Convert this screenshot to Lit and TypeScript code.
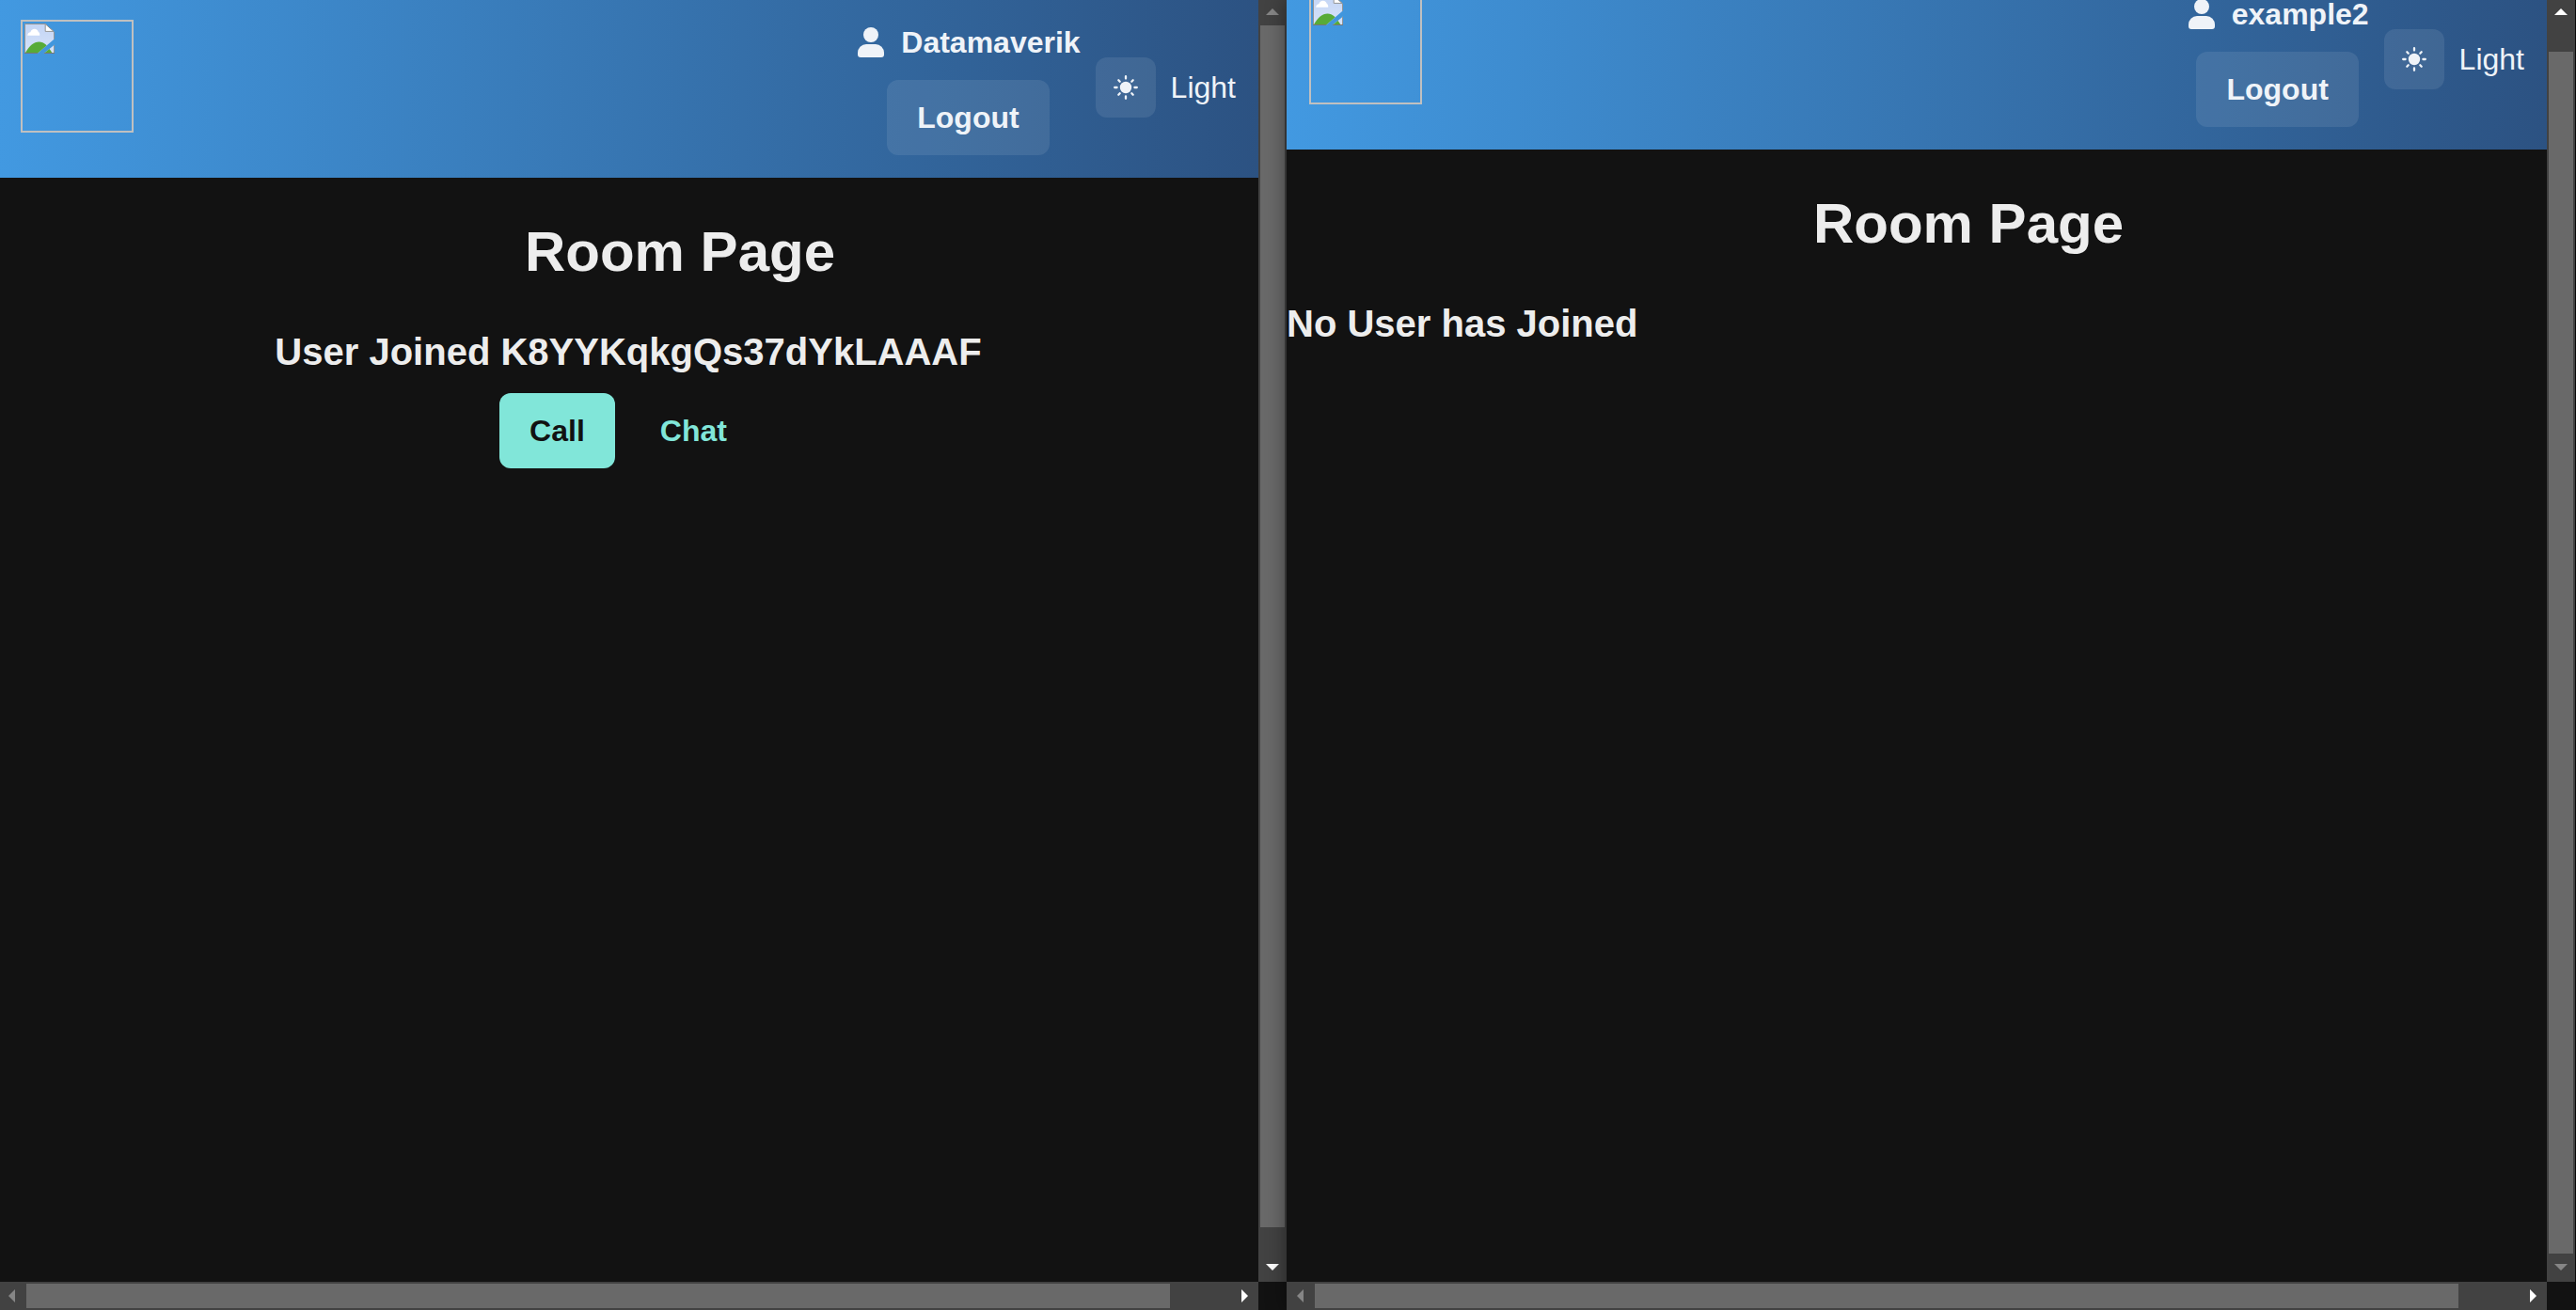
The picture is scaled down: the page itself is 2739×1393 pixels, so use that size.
import { LitElement, html, css, svg } from "lit";
import { customElement, property } from "lit/decorators.js";
import { classMap } from "lit/directives/class-map.js";

const userIcon = svg`
  <circle cx="16" cy="8" r="8"></circle>
  <path d="M11 18h10a9 9 0 0 1 9 9v2a3 3 0 0 1-3 3H5a3 3 0 0 1-3-3v-2a9 9 0 0 1 9-9z"></path>`;

const sunIcon = svg`
  <circle cx="13" cy="13" r="6.2"></circle>
  <path fill="none" stroke="currentColor" stroke-width="2.3" stroke-linecap="round"
    d="M13 1.2v2.4M13 22.4v2.4M1.2 13h2.4M22.4 13h2.4M5.3 5.3l1.4 1.4M19.3 19.3l1.4 1.4M5.3 20.7l1.4-1.4M19.3 6.7l1.4-1.4"></path>`;

const missingImageIcon = svg`
  <defs>
    <linearGradient id="sky" x1="0" y1="0" x2="0" y2="1">
      <stop offset="0" stop-color="#c3d5f5"></stop>
      <stop offset="1" stop-color="#d6e2f9"></stop>
    </linearGradient>
    <clipPath id="torn"><path d="M0 0H32V16.3L13.5 32H0zM20.5 32L32 22.6V32z"></path></clipPath>
  </defs>
  <g clip-path="url(#torn)">
    <path d="M.5.5H22L31.5 9V31.5H.5z" fill="url(#sky)" stroke="#949494"></path>
    <path d="M1 31C5 24 10 19.6 15.5 19.6S25 24 29.3 31z" fill="#58ab37"></path>
    <path d="M0 31.5H32" stroke="#777" stroke-width="1.2"></path>
    <path d="M3.2 12.8C3.2 10.6 4.6 9.4 6.4 9.2 7 7 8.6 5.8 10.7 5.8S14.4 7.1 14.8 9C16 9.6 16.4 11 16.2 12.8z" fill="#fff"></path>
    <path d="M22.2.6V8.4H31z" fill="#fff" stroke="#949494"></path>
  </g>`;

@customElement("scroll-bar")
class ScrollBar extends LitElement {
  @property({ type: Boolean, reflect: true }) vertical = false;
  @property({ type: Boolean }) atEnd = false;
  @property({ type: Number }) size = 95;

  static styles = css`
    :host {
      display: grid;
      grid-template: 30px / 30px 1fr 30px;
      background: #424242;
    }
    :host([vertical]) {
      grid-template: 30px 1fr 30px / 30px;
    }
    .arrow {
      width: 30px;
      height: 30px;
      display: block;
      fill: #868686;
    }
    .active {
      fill: #fff;
    }
    .track {
      display: flex;
      padding: 2px 0;
    }
    :host([vertical]) .track {
      flex-direction: column;
      padding: 0 2px;
    }
    .end {
      justify-content: flex-end;
    }
    .thumb {
      background: #696969;
    }
  `;

  render() {
    const back = this.vertical ? "M8 19L15 12L22 19z" : "M18 8L11 15L18 22z";
    const forward = this.vertical ? "M8 11L15 18L22 11z" : "M12 8L19 15L12 22z";
    return html`
      <svg class=${classMap({ arrow: true, active: this.atEnd })} viewBox="0 0 30 30"><path d=${back}></path></svg>
      <div class=${classMap({ track: true, end: this.atEnd })}>
        <div class="thumb" style="flex-basis: ${this.size}%"></div>
      </div>
      <svg class=${classMap({ arrow: true, active: !this.atEnd })} viewBox="0 0 30 30"><path d=${forward}></path></svg>
    `;
  }
}

@customElement("room-pane")
class RoomPane extends LitElement {
  @property() user = "";
  @property() peer = "";
  @property({ type: Boolean, reflect: true }) scrolled = false;

  static styles = css`
    :host {
      display: grid;
      grid-template: minmax(0, 1fr) 30px / minmax(0, 1fr) 30px;
      background: #121212;
      color: #ededed;
    }
    .viewport {
      overflow: hidden;
    }
    :host([scrolled]) .page {
      margin-top: -30px;
    }
    header {
      display: flex;
      align-items: center;
      justify-content: space-between;
      padding: 24px;
      background: linear-gradient(to right, #4299e1, #2c5282);
      color: #eff3f8;
      font-size: 32px;
      line-height: 48px;
    }
    .logo {
      align-self: flex-start;
      box-sizing: border-box;
      width: 120px;
      height: 120px;
      padding: 2px;
      border: 2px solid #c0c0c0;
    }
    .logo svg {
      display: block;
    }
    .actions,
    .theme,
    .name {
      display: flex;
      align-items: center;
      gap: 16px;
    }
    .account {
      display: flex;
      flex-direction: column;
      align-items: center;
      gap: 16px;
    }
    .name {
      font-weight: 700;
    }
    svg {
      fill: currentColor;
    }
    button {
      box-sizing: border-box;
      height: 80px;
      padding: 0 32px;
      border: 0;
      border-radius: 12px;
      background: none;
      color: inherit;
      font: inherit;
      font-size: 32px;
      font-weight: 700;
      cursor: pointer;
    }
    .soft {
      background: rgba(255, 255, 255, 0.09);
    }
    .toggle {
      display: flex;
      align-items: center;
      justify-content: center;
      width: 64px;
      height: 64px;
      padding: 0;
    }
    h1 {
      margin: 43px 0 46px;
      padding-left: 110px;
      font-size: 60px;
      line-height: 72px;
      text-align: center;
    }
    h2 {
      margin: 0;
      font-size: 40px;
      line-height: 48px;
    }
    .joined {
      display: flex;
      flex-direction: column;
      align-items: center;
      gap: 20px;
    }
    .buttons {
      display: flex;
      gap: 16px;
    }
    .call {
      background: #81e6d9;
      color: #121212;
    }
    .chat {
      color: #81e6d9;
    }
  `;

  render() {
    return html`
      <div class="viewport">
        <div class="page">
          <header>
            <div class="logo" role="img" aria-label="Logo">
              <svg width="32" height="32" viewBox="0 0 32 32">${missingImageIcon}</svg>
            </div>
            <div class="actions">
              <div class="account">
                <div class="name">
                  <svg width="32" height="32" viewBox="0 0 32 32">${userIcon}</svg>
                  <span>${this.user}</span>
                </div>
                <button class="soft" type="button">Logout</button>
              </div>
              <div class="theme">
                <button class="soft toggle" type="button" aria-labelledby="mode">
                  <svg width="26" height="26" viewBox="0 0 26 26">${sunIcon}</svg>
                </button>
                <span id="mode">Light</span>
              </div>
            </div>
          </header>
          <main>
            <h1>Room Page</h1>
            ${this.peer
              ? html`<div class="joined">
                  <h2>User Joined ${this.peer}</h2>
                  <div class="buttons">
                    <button class="call" type="button">Call</button>
                    <button class="chat" type="button">Chat</button>
                  </div>
                </div>`
              : html`<h2>No User has Joined</h2>`}
          </main>
        </div>
      </div>
      <scroll-bar vertical .size=${97.85} .atEnd=${this.scrolled}></scroll-bar>
      <scroll-bar .size=${95}></scroll-bar>
    `;
  }
}

@customElement("app-root")
class AppRoot extends LitElement {
  static styles = css`
    :host {
      display: block;
      height: 100vh;
      overflow: hidden;
      background: #0c0c0c;
      font-family: "Liberation Sans", Arial, sans-serif;
    }
    .windows {
      display: grid;
      grid-template: minmax(0, 1fr) / 1fr 1fr;
      height: calc(100vh + 3px);
      margin: -3px 1px 0 -2px;
    }
    .front {
      position: relative;
      box-shadow: 0 0 20px rgba(0, 0, 0, 0.45);
    }
  `;

  render() {
    return html`
      <div class="windows">
        <room-pane user="Datamaverik" peer="K8YYKqkgQs37dYkLAAAF"></room-pane>
        <room-pane class="front" user="example2" scrolled></room-pane>
      </div>
    `;
  }
}
